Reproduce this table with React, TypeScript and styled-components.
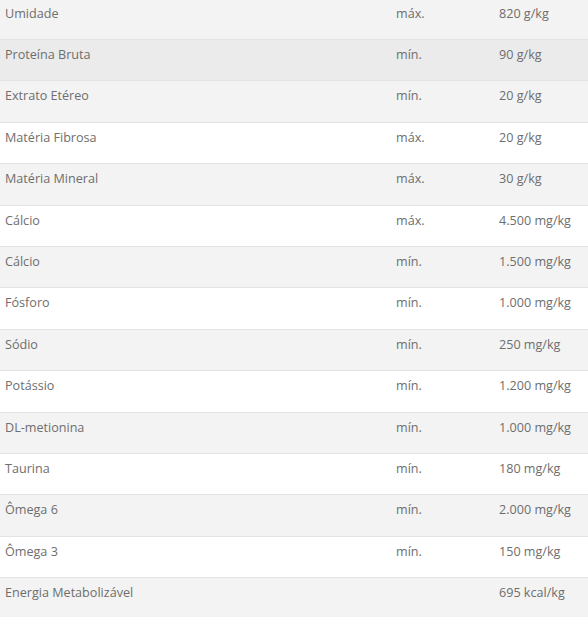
import styled, { createGlobalStyle } from 'styled-components';

const GlobalStyle = createGlobalStyle`
  html, body {
    margin: 0;
    padding: 0;
    background: #fff;
  }
  body {
    font-family: 'Open Sans', 'Liberation Sans', sans-serif;
  }
`;

const rows = [
  { name: 'Umidade', kind: 'máx.', value: '820 g/kg' },
  { name: 'Proteína Bruta', kind: 'mín.', value: '90 g/kg' },
  { name: 'Extrato Etéreo', kind: 'mín.', value: '20 g/kg' },
  { name: 'Matéria Fibrosa', kind: 'máx.', value: '20 g/kg' },
  { name: 'Matéria Mineral', kind: 'máx.', value: '30 g/kg' },
  { name: 'Cálcio', kind: 'máx.', value: '4.500 mg/kg' },
  { name: 'Cálcio', kind: 'mín.', value: '1.500 mg/kg' },
  { name: 'Fósforo', kind: 'mín.', value: '1.000 mg/kg' },
  { name: 'Sódio', kind: 'mín.', value: '250 mg/kg' },
  { name: 'Potássio', kind: 'mín.', value: '1.200 mg/kg' },
  { name: 'DL-metionina', kind: 'mín.', value: '1.000 mg/kg' },
  { name: 'Taurina', kind: 'mín.', value: '180 mg/kg' },
  { name: 'Ômega 6', kind: 'mín.', value: '2.000 mg/kg' },
  { name: 'Ômega 3', kind: 'mín.', value: '150 mg/kg' },
  { name: 'Energia Metabolizável', kind: '', value: '695 kcal/kg' },
];

const Table = styled.div`
  margin-top: -1.4px;
  width: 588px;
`;

const Row = styled.div<{ $shade: 'white' | 'grey' | 'hover' }>`
  display: grid;
  grid-template-columns: 391px 103px 1fr;
  height: 41.4px;
  box-sizing: border-box;
  border-bottom: 1px solid #e3e3e3;
  background: ${(p) =>
    p.$shade === 'hover' ? '#ebebeb' : p.$shade === 'grey' ? '#f3f3f3' : '#fff'};
`;

const Cell = styled.div`
  padding: 7px 0 0 5px;
  font-size: 12.6px;
  line-height: 16px;
  color: #6e6e6e;
  white-space: nowrap;
`;

export default function App() {
  return (
    <>
      <GlobalStyle />
      <Table>
        {rows.map((r, i) => (
          <Row key={i} $shade={i === 1 ? 'hover' : i % 2 === 0 ? 'grey' : 'white'}>
            <Cell>{r.name}</Cell>
            <Cell>{r.kind}</Cell>
            <Cell>{r.value}</Cell>
          </Row>
        ))}
      </Table>
    </>
  );
}
